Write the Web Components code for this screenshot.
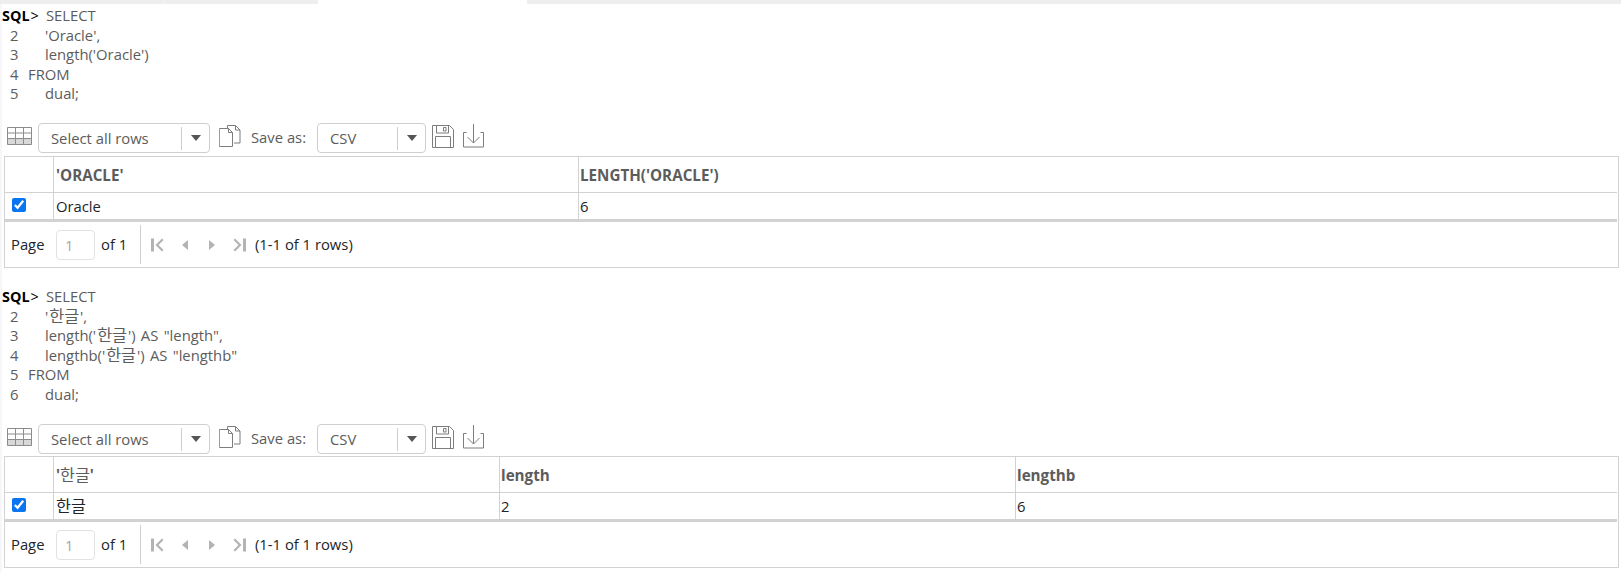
<!DOCTYPE html>
<html lang="ko">
<head>
<meta charset="utf-8">
<title>SQL</title>
<style>
    html, body { margin: 0; padding: 0; background: #fff; }
    body {
        width: 1621px;
        height: 572px;
        overflow: hidden;
        font: 14.8px "Open Sans", "Noto Sans CJK KR", sans-serif;
        color: #212529;
        background: linear-gradient(to right, #f6f6fb 2px, #fff 2px);
    }
    .ko { font-size: 16.2px; line-height: 1; margin: 0 1px; }
</style>
</head>
<body>
<tab-strip></tab-strip>

<sql-block>
    <sql-line prompt>SELECT</sql-line>
    <sql-line n="2" indent>'Oracle',</sql-line>
    <sql-line n="3" indent>length('Oracle')</sql-line>
    <sql-line n="4">FROM</sql-line>
    <sql-line n="5" indent>dual;</sql-line>
</sql-block>
<result-toolbar></result-toolbar>
<result-grid columns="524,1" headers="'ORACLE'|LENGTH('ORACLE')" cells="Oracle|6"></result-grid>

<sql-block class="second">
    <sql-line prompt>SELECT</sql-line>
    <sql-line n="2" indent>'<span class="ko">한글</span>',</sql-line>
    <sql-line n="3" indent>length('<span class="ko">한글</span>') AS "length",</sql-line>
    <sql-line n="4" indent>lengthb('<span class="ko">한글</span>') AS "lengthb"</sql-line>
    <sql-line n="5">FROM</sql-line>
    <sql-line n="6" indent>dual;</sql-line>
</sql-block>
<result-toolbar></result-toolbar>
<result-grid class="second" columns="445,516,1" headers="'한글'|length|lengthb" cells="한글|2|6"></result-grid>

<script>
customElements.define("tab-strip", class extends HTMLElement {
    connectedCallback() {
        if (this.shadowRoot) return
        this.attachShadow({mode: "open"}).innerHTML = `
            <style>
                :host { display: flex; height: 4px; background: #eee; }
                .a { width: 163px; border-right: 1px solid #f6f6f6; }
                .b { width: 154px; }
                .active { width: 209px; background: #fff; }
            </style>
            <div class="a"></div><div class="b"></div><div class="active"></div>
        `
    }
})

customElements.define("sql-block", class extends HTMLElement {
    connectedCallback() {
        if (this.shadowRoot) return
        this.attachShadow({mode: "open"}).innerHTML = `
            <style>
                :host { display: block; padding-top: 2px; margin-bottom: 19.5px; }
                :host(.second) { padding-top: 19px; margin-bottom: 20px; }
            </style>
            <slot></slot>
        `
    }
})

customElements.define("sql-line", class extends HTMLElement {
    connectedCallback() {
        if (this.shadowRoot) return
        const n = this.getAttribute("n") || ""
        const head = this.hasAttribute("prompt")
            ? `<span class="prompt">SQL<span class="gt">&gt;</span></span>`
            : `<span class="num">${n}</span>`
        this.attachShadow({mode: "open"}).innerHTML = `
            <style>
                :host {
                    display: flex;
                    height: 19.5px;
                    line-height: 19.5px;
                    color: #5c5c5c;
                    white-space: pre;
                    word-spacing: 1.5px;
                }
                .prompt { width: 46px; padding-left: 2px; box-sizing: border-box; color: #000; font-weight: 700; font-size: 14.4px; }
                .gt { font-weight: 400; padding-left: 1px; }
                .num { width: 28px; padding-left: 10px; box-sizing: border-box; }
                :host([indent]) .num { width: 45px; }
                .body { display: block; }
            </style>
            ${head}<span class="body"><slot></slot></span>
        `
    }
})

customElements.define("tool-select", class extends HTMLElement {
    connectedCallback() {
        if (this.shadowRoot) return
        this.attachShadow({mode: "open"}).innerHTML = `
            <style>
                :host {
                    display: flex;
                    align-items: center;
                    box-sizing: border-box;
                    height: 30px;
                    border: 1px solid #cfcfcf;
                    border-radius: 4px;
                    color: #5c5c5c;
                    background: #fff;
                }
                .label { flex: 1; padding-left: 12px; }
                .arrow {
                    display: flex;
                    align-items: center;
                    justify-content: center;
                    width: 27px;
                    height: 23px;
                    border-left: 1px solid #cfcfcf;
                }
                .arrow i {
                    border: 5px solid transparent;
                    border-top: 6px solid #555;
                    border-bottom: 0;
                }
            </style>
            <span class="label"><slot></slot></span>
            <span class="arrow"><i></i></span>
        `
    }
})

customElements.define("result-toolbar", class extends HTMLElement {
    connectedCallback() {
        if (this.shadowRoot) return
        this.attachShadow({mode: "open"}).innerHTML = `
            <style>
                :host {
                    display: flex;
                    align-items: flex-start;
                    height: 30px;
                    padding-left: 6px;
                    color: #5c5c5c;
                }
                svg { display: block; flex: none; fill: none; stroke: #7d7d7d; }
                .grid { margin: 4px 5px 0 0; }
                .sel { width: 172px; }
                .copy { margin: 2px 0 0 8px; }
                .save-label { margin: 4px 0 0 9px; width: 66px; white-space: pre; }
                .csv { width: 109px; }
                .disk { margin: 2px 0 0 6px; }
                .down { margin: 1px 0 0 9px; }
            </style>
            <svg class="grid" width="27" height="18" viewBox="0 0 27 18">
                <path d="M1 12h25v5.500H1z" fill="#d8d8d8" stroke="none"/>
                <path d="M1.500 .5h24v17h-24zM1.500 6h24M1.500 11.500h24" stroke="#8b8b8b"/>
                <path d="M9.500 .5v17M17.500 .5v17" stroke="#a08a76"/>
            </svg>
            <tool-select class="sel">Select all rows</tool-select>
            <svg class="copy" width="24" height="23" viewBox="0 0 24 23">
                <path d="M1.500 3.500h9l4 4v14h-13zM10.500 3.500v4h4"/>
                <path d="M9.500 3V.5h8l4.500 4.500v13h-6M17.500 .5V5H22"/>
                <path d="M1.500 3.500v18" stroke="#6fa8dc"/>
            </svg>
            <span class="save-label">Save as:</span>
            <tool-select class="csv">CSV</tool-select>
            <svg class="disk" width="22" height="23" viewBox="0 0 22 23">
                <path d="M.5 .5h17l4 4v18H.5zM4.500 .5v7.500h12V.5M11.500 2.500h2.500v3.500h-2.500zM3.500 22.500V11.500h15v11"/>
            </svg>
            <svg class="down" width="22" height="24" viewBox="0 0 22 24">
                <path d="M3.500 8.500h-3v14.500h20V8.500h-3M10.500 0v19M4.500 13l6 6 6-6"/>
            </svg>
        `
    }
})

customElements.define("result-pager", class extends HTMLElement {
    connectedCallback() {
        if (this.shadowRoot) return
        this.attachShadow({mode: "open"}).innerHTML = `
            <style>
                :host {
                    display: flex;
                    align-items: center;
                    height: 45px;
                    padding-left: 6px;
                    color: #212529;
                }
                .page-label { width: 33px; padding-bottom: 2px; }
                .of-label { width: 26px; white-space: pre; padding-bottom: 2px; }
                .rows-label { padding-bottom: 2px; }
                .page-no {
                    box-sizing: border-box;
                    display: flex;
                    align-items: center;
                    width: 39px;
                    height: 30px;
                    margin: 0 6px 0 12px;
                    padding: 1px 0 0 8px;
                    border: 1px solid #e2e2e2;
                    border-radius: 4px;
                    color: #a5a5a5;
                }
                .sep { width: 1px; height: 39px; background: #cfcfcf; margin: 0 9px 0 13px; }
                svg { display: block; fill: #b3b3b3; stroke: none; margin-right: 8px; }
            </style>
            <span class="page-label">Page</span>
            <span class="page-no">1</span>
            <span class="of-label">of 1</span>
            <span class="sep"></span>
            <svg width="97" height="16" viewBox="0 0 97 16">
                <path d="M1 1.500h3v13H1zM12 1.500 5.500 8l6.500 6.500 1.500-1.500L8.500 8l5-5z"/>
                <path d="M38 3v10L32 8z"/>
                <path d="M59 3v10L65 8z"/>
                <path d="M85 1.500 83.500 3l5 5-5 5 1.500 1.500L91.500 8zM93 1.500h3v13h-3z"/>
            </svg>
            <span class="rows-label">(1-1 of 1 rows)</span>
        `
    }
})

customElements.define("result-grid", class extends HTMLElement {
    connectedCallback() {
        if (this.shadowRoot) return
        const widths = this.getAttribute("columns").split(",")
        const wrap = s => s.replace(/[가-힣]+/g, m => `<span class="ko">${m}</span>`)
        const headers = this.getAttribute("headers").split("|").map(wrap)
        const cells = this.getAttribute("cells").split("|").map(wrap)
        const tracks = "49px " + widths.map((w, i) => i == widths.length - 1 ? "1fr" : w + "px").join(" ")
        const heads = headers.map(h => `<div class="cell head"><span>${h}</span></div>`).join("")
        const vals = cells.map(c => `<div class="cell"><span>${c}</span></div>`).join("")
        this.attachShadow({mode: "open"}).innerHTML = `
            <style>
                :host {
                    display: block;
                    box-sizing: border-box;
                    margin: 3px 2px 0 4px;
                    border: 1px solid #d2d2d2;
                    color: #212529;
                }
                :host(.second) { margin-top: 2px; }
                .row { display: grid; grid-template-columns: ${tracks}; margin-right: 1px; }
                .row.top { height: 36px; border-bottom: 1px solid #d2d2d2; box-sizing: border-box; }
                .row.body { height: 26px; border-bottom: 3px solid #d2d2d2; box-sizing: content-box; }
                .cell {
                    display: flex;
                    align-items: center;
                    padding-left: 1px;
                    overflow: hidden;
                }
                .cell:first-child { border-right: 1px solid #d2d2d2; padding: 0; }
                .cell:nth-child(n+3) { border-left: 1px solid #d2d2d2; }
                .cell:nth-child(2) { padding-left: 2px; }
                .head { color: #5c5c5c; font-weight: 700; font-size: 15.2px; }
                .ko { font-size: 16.2px; line-height: 1; font-weight: 400; }
                input { width: 14px; height: 14px; margin: 0 0 2px 7px; accent-color: #0a75f0; }
            </style>
            <div class="row top"><div class="cell"></div>${heads}</div>
            <div class="row body"><div class="cell"><input type="checkbox" checked></div>${vals}</div>
            <result-pager></result-pager>
        `
    }
})
</script>
</body>
</html>
